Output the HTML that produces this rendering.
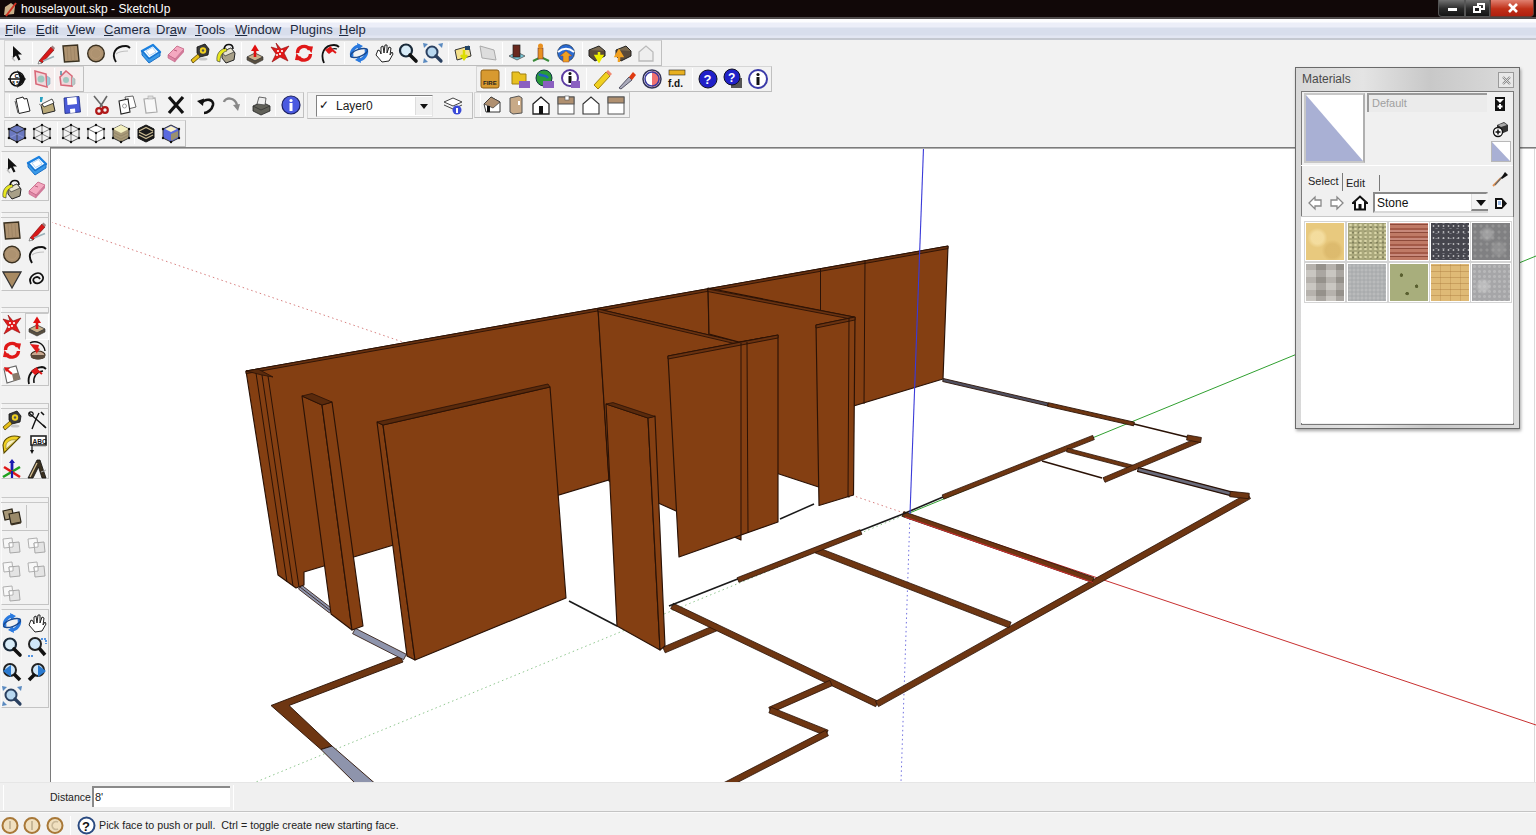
<!DOCTYPE html><html><head><meta charset="utf-8"><style>
*{margin:0;padding:0;box-sizing:border-box}
html,body{width:1536px;height:835px;overflow:hidden;background:#f2f2f2;font-family:"Liberation Sans",sans-serif;position:relative}
.a{position:absolute}
#title{left:0;top:0;width:1536px;height:19px;background:#110808;border-bottom:2px solid #4e4a4a}
#title span{position:absolute;left:21px;top:2px;color:#fff;font-size:12px;letter-spacing:0px}
#menu{left:0;top:19px;width:1536px;height:21px;background:linear-gradient(#fdfdfe 0px,#fdfdfe 3px,#eceef8 4px,#eceef8 8px,#d8deec 9px,#d8deec 16px,#e2e6f2 17px,#e2e6f2 19px);border-bottom:2px solid #c4c8d0}
#menu span{position:absolute;top:3px;font-size:13px;color:#1e2a40}
#menu u{text-decoration:underline}
.tb{background:#f2f2f2;border:1px solid #d6d6d6;border-right-color:#c0c0c0;border-bottom-color:#bcbcbc}
.sep{position:absolute;width:1px;background:#c4c4c4;border-right:1px solid #fff}
svg.ic{position:absolute;width:22px;height:22px;overflow:visible}
</style></head><body>
<div id="title" class="a"><svg class="a" style="left:2px;top:1px" width="16" height="16" viewBox="0 0 16 16"><path d="M2 14 L3 6 L9 2 L13 5 L12 13 Z" fill="#c9b08a"/><path d="M4 15 L14 2" stroke="#d03020" stroke-width="2"/></svg><span>houselayout.skp - SketchUp</span><div class="a" style="left:1438px;top:0;width:27px;height:17px;background:linear-gradient(#707070,#2a2a2a 55%,#141414);border:1px solid #555;border-top:none;border-radius:0 0 0 4px"><div class="a" style="left:9px;top:8px;width:9px;height:3px;background:#fff"></div></div><div class="a" style="left:1465px;top:0;width:25px;height:17px;background:linear-gradient(#707070,#2a2a2a 55%,#141414);border:1px solid #555;border-top:none"><div class="a" style="left:11px;top:3px;width:8px;height:7px;border:2px solid #fff"></div><div class="a" style="left:7px;top:6px;width:8px;height:7px;border:2px solid #fff;background:#1a1a1a"></div></div><div class="a" style="left:1490px;top:0;width:44px;height:17px;background:linear-gradient(#e08070,#c03018 55%,#b02010);border:1px solid #6a3a30;border-top:none;border-radius:0 0 4px 0"><svg class="a" style="left:16px;top:2px" width="12" height="12" viewBox="0 0 12 12"><path d="M2 2L10 10M10 2L2 10" stroke="#fff" stroke-width="2.6"/></svg></div></div>
<div id="menu" class="a">
<span style="left:5px"><u>F</u>ile</span>
<span style="left:36px"><u>E</u>dit</span>
<span style="left:67px"><u>V</u>iew</span>
<span style="left:104px"><u>C</u>amera</span>
<span style="left:156px">Dr<u>a</u>w</span>
<span style="left:195px"><u>T</u>ools</span>
<span style="left:235px"><u>W</u>indow</span>
<span style="left:290px">Plugins</span>
<span style="left:339px"><u>H</u>elp</span>
</div>
<div class="a tb" style="left:4px;top:40px;width:658px;height:26px"></div>
<div class="sep" style="left:32px;top:42px;height:22px"></div>
<div class="sep" style="left:136px;top:42px;height:22px"></div>
<div class="sep" style="left:241px;top:42px;height:22px"></div>
<div class="sep" style="left:344px;top:42px;height:22px"></div>
<div class="sep" style="left:448px;top:42px;height:22px"></div>
<div class="sep" style="left:502px;top:42px;height:22px"></div>
<div class="sep" style="left:582px;top:42px;height:22px"></div>
<svg class="ic" style="left:6px;top:42px" viewBox="0 0 22 22"><path d="M7 4 L7 16 L10 13.5 L12.5 18.5 L14.5 17.5 L12 12.5 L16 12.5 Z" fill="#111"/><path d="M6 16 L9 19 M6 14 L8 18" stroke="#bbb" stroke-width="1.2"/></svg>
<svg class="ic" style="left:35px;top:42px" viewBox="0 0 22 22"><path d="M4 19 L16 5 L19 8 L7 21 Z" fill="#d81818" stroke="#7a0a0a" stroke-width=".7"/><path d="M16 5 L17.5 3.5 L20 6 L19 8Z" fill="#a08080"/><path d="M4 19 L7 21 L3 22Z" fill="#fff" stroke="#333" stroke-width=".5"/><path d="M8 19 L19 14.5" stroke="#9ab0b8" stroke-width="1.6"/></svg>
<svg class="ic" style="left:60px;top:42px" viewBox="0 0 22 22"><path d="M3 4 L17.5 3 L19 19 L4.5 20 Z" fill="#ad9270" stroke="#3a3020" stroke-width="1.4"/><path d="M7 5 L8 19 M10.5 5 L11.5 19 M14 4.5 L15 19" stroke="#9a8060" stroke-width=".7"/></svg>
<svg class="ic" style="left:85px;top:42px" viewBox="0 0 22 22"><circle cx="11" cy="11.5" r="8.3" fill="#ad9270" stroke="#3a3020" stroke-width="1.4"/><circle cx="11" cy="11.5" r="5" fill="none" stroke="#b89a78" stroke-width=".8"/></svg>
<svg class="ic" style="left:110px;top:42px" viewBox="0 0 22 22"><path d="M6 20 C1 12 5 4 16 4 C18 4 19 5 20 6" stroke="#111" stroke-width="1.9" fill="none"/><path d="M6 12 C9 9.5 14 9 18 9" stroke="#c0c0c0" stroke-width="1.1" fill="none"/></svg>
<svg class="ic" style="left:140px;top:42px" viewBox="0 0 22 22"><path d="M2 9 L13 3 L20 10 L9 17Z" fill="#fff" stroke="#1a80e0" stroke-width="2.4" stroke-linejoin="round"/><path d="M2 9 L2 13 L9 21 L20 14 L20 10 L9 17Z" fill="#3a9ae8" stroke="#1a70c8" stroke-width="1"/><path d="M6 9 L12.5 5.5 L16 10 L9.5 13.5Z" fill="#fff" stroke="#9cc8f0" stroke-width=".8"/></svg>
<svg class="ic" style="left:165px;top:42px" viewBox="0 0 22 22"><path d="M3 13 L12 4 L19 7 L10 17 Z" fill="#f4a8c0" stroke="#c06080" stroke-width=".8"/><path d="M3 13 L10 17 L10 20 L3 16Z" fill="#e088a8" stroke="#c06080" stroke-width=".6"/><path d="M10 17 L19 7 L19 10 L10 20Z" fill="#d07898"/><path d="M9 8 L12 9" stroke="#b05070" stroke-width=".8"/></svg>
<svg class="ic" style="left:189px;top:42px" viewBox="0 0 22 22"><path d="M8 5 L16 2 L20 7 L19 13 L11 15 L8 11Z" fill="#3a3a3a" stroke="#111" stroke-width=".8"/><circle cx="14" cy="8.5" r="3.2" fill="#f0d020"/><circle cx="14" cy="8.5" r="1.2" fill="#555"/><path d="M2 18 L9 12 L11 15 L4 21Z" fill="#e8c018" stroke="#4a3a00" stroke-width=".8"/><ellipse cx="14" cy="17" rx="4.5" ry="1.6" fill="#c8c8c8"/></svg>
<svg class="ic" style="left:215px;top:42px" viewBox="0 0 22 22"><path d="M7 10 L16 6 L20 11 L19 18 L11 21 L7 16Z" fill="#a8a088" stroke="#222" stroke-width="1"/><path d="M7 10 L16 6 L19 10 L10 14Z" fill="#e8e4d0" stroke="#333" stroke-width=".7"/><path d="M2 19 C1 12 5 7 11 6 L12 9 C7 10 5 14 5 20Z" fill="#e8e820" stroke="#333" stroke-width=".6"/><path d="M9 7 C10 1 18 1 18 7" stroke="#111" stroke-width="1.6" fill="none"/></svg>
<svg class="ic" style="left:244px;top:42px" viewBox="0 0 22 22"><path d="M3 15 L11 11 L19 15 L11 19Z" fill="#c8b08a" stroke="#333" stroke-width=".8"/><path d="M3 15 L3 18 L11 22 L19 18 L19 15 L11 19Z" fill="#5a5040" stroke="#333" stroke-width=".6"/><path d="M11 15 L11 8" stroke="#e01010" stroke-width="2.6"/><path d="M7 9 L11 2.5 L15 9Z" fill="#e01010"/></svg>
<svg class="ic" style="left:269px;top:42px" viewBox="0 0 22 22"><path d="M7 1 L12 7 L20 4 L15 11 L19 19 L11 15 L3 20 L7 12 L2 5 L9 7Z" fill="#e01818" stroke="#8a0808" stroke-width=".6"/><circle cx="9" cy="9" r="1.1" fill="#fff"/><circle cx="13" cy="9" r="1.1" fill="#fff"/><circle cx="11" cy="12" r="1.1" fill="#fff"/><circle cx="8" cy="13" r="1" fill="#fff"/></svg>
<svg class="ic" style="left:293px;top:42px" viewBox="0 0 22 22"><path d="M4.5 11 A6.5 6.5 0 0 1 16.5 7.5" stroke="#e01818" stroke-width="3.4" fill="none"/><path d="M17.5 12 A6.5 6.5 0 0 1 5.5 15" stroke="#e01818" stroke-width="3.4" fill="none"/><path d="M13 4 L20 4.5 L18.5 11Z M9 18.5 L2 18 L3.5 11Z" fill="#e01818"/></svg>
<svg class="ic" style="left:319px;top:42px" viewBox="0 0 22 22"><path d="M5 21 C1 12 5 3 15 3 C17 3 19 4 20 5" stroke="#111" stroke-width="1.8" fill="none"/><path d="M9 11 C11 7 15 6 18 7" stroke="#111" stroke-width="1.3" fill="none"/><path d="M6 8 L12 4 L14 9 L10 12Z" fill="#e01818"/><path d="M12 7 L17 11" stroke="#e01818" stroke-width="2"/></svg>
<svg class="ic" style="left:348px;top:42px" viewBox="0 0 22 22"><path d="M4 15 C2 10 6 4 12 4" stroke="#2a7ae0" stroke-width="3.2" fill="none"/><path d="M18 7 C20 12 16 18 10 18" stroke="#2a7ae0" stroke-width="3.2" fill="none"/><path d="M9 1 L15 4 L10 8Z M13 21 L7 18 L12 14Z" fill="#2a7ae0"/><ellipse cx="11" cy="11" rx="9" ry="3.5" fill="none" stroke="#1a4a90" stroke-width="1.4" transform="rotate(-20 11 11)"/></svg>
<svg class="ic" style="left:373px;top:42px" viewBox="0 0 22 22"><path d="M3 13 L5 8 L7 9 L8 12 L8 5 L10 4 L11 11 L12 3 L14 3 L14 11 L16 5 L18 6 L17 13 L19 10 L20 12 L16 19 L9 20 Z" fill="#fff" stroke="#222" stroke-width="1"/></svg>
<svg class="ic" style="left:397px;top:42px" viewBox="0 0 22 22"><circle cx="9" cy="8.5" r="6" fill="#d8ecf8" stroke="#1a2a3a" stroke-width="2.2"/><path d="M13 13 L19 19" stroke="#111" stroke-width="3.6" stroke-linecap="round"/></svg>
<svg class="ic" style="left:422px;top:42px" viewBox="0 0 22 22"><circle cx="10" cy="10" r="5.5" fill="#b8d8f0" stroke="#2a4060" stroke-width="2"/><path d="M14 14 L19 19" stroke="#2a4060" stroke-width="3.2" stroke-linecap="round"/><path d="M1 1 L6 2 L2 6Z M21 1 L16 2 L20 6Z M1 21 L2 16 L6 20Z" fill="#5a8ac0"/></svg>
<svg class="ic" style="left:452px;top:42px" viewBox="0 0 22 22"><path d="M3 8 L17 4 L19 14 L5 18Z" fill="#f4e08a" stroke="#333"/><path d="M12 8 L12 15 M9 13 L12 17 L15 13" stroke="#dd0" stroke-width="2.5" fill="none"/><rect x="13" y="4" width="5" height="4" fill="#246"/></svg>
<svg class="ic" style="left:477px;top:42px" viewBox="0 0 22 22"><path d="M3 4 L17 8 L19 18 L5 16Z" fill="#ddd" stroke="#aaa"/></svg>
<svg class="ic" style="left:506px;top:42px" viewBox="0 0 22 22"><path d="M3 14 L11 10 L19 14 L11 18Z" fill="#7cc8d8" stroke="#444" stroke-width=".7"/><rect x="7" y="3" width="7" height="12" fill="#6a2a20" stroke="#222" stroke-width=".7"/></svg>
<svg class="ic" style="left:530px;top:42px" viewBox="0 0 22 22"><path d="M3 19 L11 15 L19 19" stroke="#3a8a3a" stroke-width="2" fill="none"/><rect x="8" y="6" width="5" height="11" fill="#e89020" stroke="#633" stroke-width=".6"/><circle cx="10.5" cy="4" r="2.5" fill="#e89020"/></svg>
<svg class="ic" style="left:555px;top:42px" viewBox="0 0 22 22"><circle cx="11" cy="11" r="8.5" fill="#2a6ad0" stroke="#123" stroke-width=".6"/><path d="M3 10 C8 6 14 6 19 10" stroke="#fff" stroke-width="2" fill="none"/><path d="M8 20 L8 14 L5 14 L11 9 L17 14 L14 14 L14 20Z" fill="#f0a020" stroke="#844" stroke-width=".5"/></svg>
<svg class="ic" style="left:586px;top:42px" viewBox="0 0 22 22"><path d="M3 8 L13 4 L19 9 L9 13Z" fill="#7a6a50" stroke="#222"/><path d="M3 8 L3 14 L9 19 L19 14 L19 9" fill="#5a4a3a" stroke="#222"/><path d="M13 10 L13 16 M10 14 L13 19 L16 14Z" stroke="#ee0" fill="#ee0" stroke-width="2.5"/></svg>
<svg class="ic" style="left:611px;top:42px" viewBox="0 0 22 22"><path d="M5 8 L15 4 L20 9 L10 13Z" fill="#7a6a50" stroke="#222"/><path d="M5 8 L5 14 L10 19 L20 14 L20 9" fill="#5a4a3a" stroke="#222"/><path d="M8 20 L8 13 M5 14 L8 9 L11 14Z" stroke="#f0a020" fill="#f0a020" stroke-width="2.5"/></svg>
<svg class="ic" style="left:635px;top:42px" viewBox="0 0 22 22"><path d="M4 10 L11 4 L18 10 L18 19 L4 19Z" fill="#eee" stroke="#bbb" stroke-width="1.3"/></svg>
<div class="a tb" style="left:4px;top:66px;width:80px;height:26px"></div>
<div class="sep" style="left:30px;top:68px;height:22px"></div>
<div class="sep" style="left:54px;top:68px;height:22px"></div>
<div class="a" style="left:31px;top:67px;width:23px;height:24px;background:#f6eeee"></div>
<div class="a" style="left:56px;top:67px;width:24px;height:24px;background:#f6eeee"></div>
<svg class="ic" style="left:6px;top:68px" viewBox="0 0 22 22"><circle cx="11" cy="11" r="7" fill="#fff" stroke="#111" stroke-width="1.5"/><path d="M2 11 L18 11" stroke="#111" stroke-width="1.5"/><path d="M11 2 L20 11 L11 20 L14 11Z" fill="#111"/><text x="8.5" y="9.5" font-size="6" font-family="Liberation Sans" font-weight="bold">C</text><text x="6" y="17" font-size="5" font-family="Liberation Sans" font-weight="bold">8 5</text></svg>
<svg class="ic" style="left:31px;top:68px" viewBox="0 0 22 22"><path d="M4 3 L15 6 L16 19 L5 16Z" fill="#f0d8dc" stroke="#d86878" stroke-width="1.6"/><circle cx="10" cy="11" r="3.5" fill="#9ec8c0"/><path d="M16 8 L19 10 L19 16 L16 18" fill="#9ec8d8" stroke="#8ab" stroke-width=".6"/></svg>
<svg class="ic" style="left:56px;top:68px" viewBox="0 0 22 22"><path d="M4 9 L10 3 L16 8 L16 18 L5 17Z" fill="#f0d8dc" stroke="#d86878" stroke-width="1.6"/><circle cx="10" cy="12" r="3" fill="#9ec8c0"/><path d="M16 9 L19 11 L19 16 L16 18" fill="#b8c8c8" stroke="#aaa" stroke-width=".6"/><path d="M5 7 L5 3" stroke="#4a8aa0" stroke-width="1.5"/></svg>
<div class="a tb" style="left:476px;top:66px;width:296px;height:26px"></div>
<div class="sep" style="left:482px;top:68px;height:22px"></div>
<div class="sep" style="left:505px;top:68px;height:22px"></div>
<div class="sep" style="left:586px;top:68px;height:22px"></div>
<div class="sep" style="left:692px;top:68px;height:22px"></div>
<svg class="ic" style="left:479px;top:68px" viewBox="0 0 22 22"><rect x="2" y="2" width="18" height="18" rx="2" fill="#d89a30" stroke="#8a5a10"/><text x="4" y="17" font-size="6" font-weight="bold" fill="#222" font-family="Liberation Sans">FIRE</text></svg>
<svg class="ic" style="left:510px;top:68px" viewBox="0 0 22 22"><path d="M2 4 L9 4 L10 6 L16 6 L16 16 L2 16Z" fill="#e8c020" stroke="#a08010"/><rect x="9" y="13" width="11" height="7" fill="#8a60c0"/></svg>
<svg class="ic" style="left:534px;top:68px" viewBox="0 0 22 22"><circle cx="10" cy="10" r="8" fill="#2a9a3a" stroke="#134"/><path d="M5 6 C8 9 11 6 14 10" stroke="#2060c0" stroke-width="2.5" fill="none"/><rect x="9" y="13" width="11" height="7" fill="#8a60c0"/></svg>
<svg class="ic" style="left:560px;top:68px" viewBox="0 0 22 22"><circle cx="10" cy="10" r="8" fill="#fff" stroke="#5a3aa0" stroke-width="2"/><rect x="8.5" y="8" width="3" height="7" fill="#111"/><circle cx="10" cy="5.5" r="1.5" fill="#111"/><rect x="11" y="13" width="9" height="7" fill="#8a60c0"/></svg>
<svg class="ic" style="left:591px;top:68px" viewBox="0 0 22 22"><path d="M3 17 L15 4 L19 8 L7 21Z" fill="#f0d020" stroke="#a08010"/><path d="M15 4 L17 2 L21 6 L19 8Z" fill="#f08a70"/></svg>
<svg class="ic" style="left:616px;top:68px" viewBox="0 0 22 22"><path d="M3 20 L13 9 L16 12 L5 21Z" fill="#aab" stroke="#556"/><path d="M13 9 L17 4 L20 7 L16 12Z" fill="#e03a10"/></svg>
<svg class="ic" style="left:641px;top:68px" viewBox="0 0 22 22"><circle cx="11" cy="11" r="9" fill="#fff" stroke="#335" stroke-width="1.5"/><path d="M11 3 A8 8 0 0 1 11 19Z" fill="#f07070"/><circle cx="11" cy="11" r="7" fill="none" stroke="#3a3aa0" stroke-width="1.5"/></svg>
<svg class="ic" style="left:666px;top:68px" viewBox="0 0 22 22"><rect x="3" y="2" width="16" height="5" fill="#e8b020" stroke="#222" stroke-width=".6"/><text x="2" y="19" font-size="10" font-weight="bold" fill="#111" font-family="Liberation Sans">f.d.</text></svg>
<svg class="ic" style="left:697px;top:68px" viewBox="0 0 22 22"><circle cx="11" cy="11" r="9" fill="#2020c8" stroke="#112"/><text x="6.5" y="16" font-size="13" font-weight="bold" fill="#fff" font-family="Liberation Sans">?</text></svg>
<svg class="ic" style="left:722px;top:68px" viewBox="0 0 22 22"><rect x="9" y="10" width="11" height="10" fill="#555"/><circle cx="10" cy="9" r="8" fill="#2020c8" stroke="#112"/><text x="6" y="14" font-size="12" font-weight="bold" fill="#fff" font-family="Liberation Sans">?</text></svg>
<svg class="ic" style="left:747px;top:68px" viewBox="0 0 22 22"><circle cx="11" cy="11" r="9" fill="#fff" stroke="#3a3aa8" stroke-width="2"/><circle cx="11" cy="6.5" r="1.6" fill="#111"/><rect x="9.5" y="9" width="3" height="8" fill="#111"/></svg>
<div class="a tb" style="left:4px;top:92px;width:300px;height:26px"></div>
<div class="sep" style="left:9px;top:94px;height:22px"></div>
<div class="sep" style="left:87px;top:94px;height:22px"></div>
<div class="sep" style="left:191px;top:94px;height:22px"></div>
<div class="sep" style="left:245px;top:94px;height:22px"></div>
<div class="sep" style="left:275px;top:94px;height:22px"></div>
<svg class="ic" style="left:11px;top:94px" viewBox="0 0 22 22"><path d="M5 5 L12 3 L13 5 L16 4.5 L19 17 L8 19.5Z" fill="#fff" stroke="#222" stroke-width="1"/><path d="M4 7 L7 19" stroke="#555" stroke-width="1"/></svg>
<svg class="ic" style="left:36px;top:94px" viewBox="0 0 22 22"><path d="M5 11 L17 8 L19 17 L7 20Z" fill="#b8a878" stroke="#222" stroke-width="1"/><path d="M6 10 L16 5 L18 9 L8 13Z" fill="#fff" stroke="#222" stroke-width=".8"/><path d="M4 3 L7 3 L6 8 L4 8Z" fill="#2aa0c0"/><path d="M3 10 L6 12" stroke="#888" stroke-width="1"/></svg>
<svg class="ic" style="left:61px;top:94px" viewBox="0 0 22 22"><path d="M3 4 L18 2.5 L19.5 18 L4 19.5Z" fill="#4a5ad8" stroke="#1a2a80" stroke-width=".8"/><path d="M6 4 L15.5 3 L16 10 L6.5 11Z" fill="#fff"/><path d="M9 15 L14 14.5 L14.3 18.5 L9.3 19Z" fill="#fff"/></svg>
<svg class="ic" style="left:90px;top:94px" viewBox="0 0 22 22"><path d="M4 2 L13 13 M17 2 L10 13" stroke="#666" stroke-width="1.6"/><circle cx="9" cy="17" r="2.8" fill="none" stroke="#b01818" stroke-width="2.2"/><circle cx="15" cy="16" r="2.8" fill="none" stroke="#b01818" stroke-width="2.2"/></svg>
<svg class="ic" style="left:116px;top:94px" viewBox="0 0 22 22"><path d="M9 3 L17 2 L20 13 L12 15Z" fill="#fff" stroke="#555" stroke-width=".9"/><path d="M3 7 L12 5 L14 18 L5 20Z" fill="#fff" stroke="#222" stroke-width="1.1"/><circle cx="8.5" cy="12" r="2" fill="none" stroke="#888" stroke-width=".8"/></svg>
<svg class="ic" style="left:140px;top:94px" viewBox="0 0 22 22"><path d="M4 5 L15 4 L17 18 L6 19Z" fill="#f8f8f8" stroke="#aaa" stroke-width="1.2"/><rect x="8" y="2" width="5" height="3" fill="#ddd" stroke="#aaa" stroke-width=".6"/></svg>
<svg class="ic" style="left:165px;top:94px" viewBox="0 0 22 22"><path d="M4 3 L18 19 M18 3 L4 19" stroke="#111" stroke-width="3.2"/></svg>
<svg class="ic" style="left:195px;top:94px" viewBox="0 0 22 22"><path d="M6 9 C11 4 19 5 18 11 C17 16 12 19 9 19" stroke="#111" stroke-width="2.6" fill="none"/><path d="M2 7 L9 4.5 L8 12Z" fill="#111"/></svg>
<svg class="ic" style="left:220px;top:94px" viewBox="0 0 22 22"><path d="M4 8 C5 3 15 3 17 11" stroke="#888" stroke-width="2.4" fill="none"/><path d="M13 11 L20 10 L18 17Z" fill="#888"/></svg>
<svg class="ic" style="left:250px;top:94px" viewBox="0 0 22 22"><path d="M3 12 L12 8 L20 12 L20 17 L11 21 L3 17Z" fill="#606058" stroke="#222" stroke-width=".8"/><path d="M7 10 L9 3 L16 4 L15 11Z" fill="#eee" stroke="#444" stroke-width=".8"/><path d="M3 12 L11 16 L20 12" stroke="#333" fill="none" stroke-width=".8"/></svg>
<svg class="ic" style="left:280px;top:94px" viewBox="0 0 22 22"><circle cx="11" cy="11" r="9" fill="#4a5ae0" stroke="#1a2060" stroke-width="1.2"/><circle cx="11" cy="6.5" r="1.6" fill="#fff"/><rect x="9.5" y="9" width="3" height="8" fill="#fff"/></svg>
<div class="a tb" style="left:307px;top:92px;width:166px;height:27px"></div>
<div class="a" style="left:316px;top:95px;width:117px;height:22px;background:#fff;border:1px solid #828282;border-right-color:#e4e4e4;border-bottom-color:#e4e4e4"></div>
<div class="a" style="left:319px;top:98px;font-size:12px;color:#111">&#10003;</div>
<div class="a" style="left:336px;top:99px;font-size:12px;color:#222">Layer0</div>
<div class="a" style="left:415px;top:97px;width:17px;height:18px;background:#f0f0f0;border-left:1px solid #ddd"><div class="a" style="left:4px;top:7px;width:0;height:0;border-left:4px solid transparent;border-right:4px solid transparent;border-top:5px solid #111"></div></div>
<svg class="ic" style="left:442px;top:94px" viewBox="0 0 22 22"><path d="M2 8 L11 4 L20 8 L11 12Z" fill="#fff" stroke="#444"/><path d="M2 11 L11 15 L20 11" stroke="#444" fill="none"/><circle cx="15" cy="16" r="4.5" fill="#3a4ad8"/><rect x="14" y="14" width="2" height="5" fill="#fff"/></svg>
<div class="a tb" style="left:474px;top:92px;width:156px;height:26px"></div>
<div class="sep" style="left:480px;top:94px;height:22px"></div>
<svg class="ic" style="left:481px;top:94px" viewBox="0 0 22 22"><path d="M3 10 L10 3 L19 8 L19 18 L5 18Z" fill="#fff" stroke="#333"/><path d="M3 10 L10 3 L19 8 L12 14Z" fill="#b09070" stroke="#333" stroke-width=".7"/><rect x="6" y="12" width="3" height="6" fill="#111"/></svg>
<svg class="ic" style="left:505px;top:94px" viewBox="0 0 22 22"><path d="M5 4 L14 2 L17 4 L17 19 L8 20 L5 18Z" fill="#c8aa88" stroke="#555"/><rect x="13" y="7" width="2" height="4" fill="#fff"/></svg>
<svg class="ic" style="left:530px;top:94px" viewBox="0 0 22 22"><path d="M3 10 L11 3 L19 10 L19 20 L3 20Z" fill="#fff" stroke="#222" stroke-width="1.3"/><rect x="9" y="12" width="4" height="8" fill="#111"/></svg>
<svg class="ic" style="left:555px;top:94px" viewBox="0 0 22 22"><rect x="3" y="3" width="16" height="17" fill="#fff" stroke="#555"/><rect x="3" y="3" width="16" height="7" fill="#b09070" stroke="#555"/><rect x="10" y="2" width="4" height="4" fill="#fff" stroke="#555" stroke-width=".6"/></svg>
<svg class="ic" style="left:580px;top:94px" viewBox="0 0 22 22"><path d="M3 10 L11 3 L19 10 L19 20 L3 20Z" fill="#fff" stroke="#333" stroke-width="1.1"/></svg>
<svg class="ic" style="left:605px;top:94px" viewBox="0 0 22 22"><rect x="3" y="3" width="16" height="17" fill="#fff" stroke="#555"/><rect x="3" y="3" width="16" height="6" fill="#b09070" stroke="#555"/></svg>
<div class="a tb" style="left:4px;top:120px;width:182px;height:27px"></div>
<div class="sep" style="left:57px;top:122px;height:22px"></div>
<div class="sep" style="left:134px;top:122px;height:22px"></div>
<svg class="ic" style="left:6px;top:122px" viewBox="0 0 22 22"><path d="M3 7 L11 3 L19 7 L19 16 L11 20 L3 16Z" fill="#6a78c0" stroke="#222" stroke-width="1"/><path d="M3 7 L11 11 L19 7 M11 11 L11 20" stroke="#333" fill="none" stroke-width=".8"/><path d="M3 16 L11 12 L19 16" stroke="#9aa4d8" fill="none" stroke-width=".7"/><g fill="#111"><circle cx="3" cy="7" r="1.3"/><circle cx="11" cy="3" r="1.3"/><circle cx="19" cy="7" r="1.3"/><circle cx="3" cy="16" r="1.3"/><circle cx="11" cy="20" r="1.3"/><circle cx="19" cy="16" r="1.3"/></g></svg>
<svg class="ic" style="left:31px;top:122px" viewBox="0 0 22 22"><path d="M3 7 L11 3 L19 7 L19 16 L11 20 L3 16Z" fill="none" stroke="#333" stroke-width=".9"/><path d="M3 7 L11 11 L19 7 M11 11 L11 20 M3 16 L11 12 L19 16 M11 3 L11 12" stroke="#555" fill="none" stroke-width=".7"/><g fill="#111"><circle cx="3" cy="7" r="1.2"/><circle cx="11" cy="3" r="1.2"/><circle cx="19" cy="7" r="1.2"/><circle cx="3" cy="16" r="1.2"/><circle cx="11" cy="20" r="1.2"/><circle cx="19" cy="16" r="1.2"/><circle cx="11" cy="11" r="1.2"/></g></svg>
<svg class="ic" style="left:60px;top:122px" viewBox="0 0 22 22"><path d="M3 7 L11 3 L19 7 L19 16 L11 20 L3 16Z" fill="none" stroke="#333" stroke-width=".9"/><path d="M3 7 L11 11 L19 7 M11 11 L11 20 M3 16 L11 12 L19 16 M11 3 L11 12" stroke="#555" fill="none" stroke-width=".7"/><g fill="#111"><circle cx="3" cy="7" r="1.2"/><circle cx="11" cy="3" r="1.2"/><circle cx="19" cy="7" r="1.2"/><circle cx="3" cy="16" r="1.2"/><circle cx="11" cy="20" r="1.2"/><circle cx="19" cy="16" r="1.2"/><circle cx="11" cy="11" r="1.2"/></g></svg>
<svg class="ic" style="left:85px;top:122px" viewBox="0 0 22 22"><path d="M3 7 L11 3 L19 7 L19 16 L11 20 L3 16Z" fill="#fff" stroke="#333" stroke-width=".9"/><path d="M3 7 L11 11 L19 7 M11 11 L11 20" stroke="#444" fill="none" stroke-width=".8"/><g fill="#111"><circle cx="3" cy="7" r="1.2"/><circle cx="11" cy="3" r="1.2"/><circle cx="19" cy="7" r="1.2"/><circle cx="3" cy="16" r="1.2"/><circle cx="11" cy="20" r="1.2"/><circle cx="19" cy="16" r="1.2"/><circle cx="11" cy="11" r="1.2"/></g></svg>
<svg class="ic" style="left:110px;top:122px" viewBox="0 0 22 22"><path d="M3 7 L11 3 L19 7 L19 16 L11 20 L3 16Z" fill="#a89a78" stroke="#333" stroke-width="1"/><path d="M3 7 L11 3 L19 7 L11 11Z" fill="#f4f0c0"/><path d="M3 10 L11 14 L19 10 M3 13 L11 17 L19 13" stroke="#8a7a60" stroke-width=".6" fill="none"/><g fill="#111"><circle cx="3" cy="7" r="1.2"/><circle cx="19" cy="7" r="1.2"/><circle cx="3" cy="16" r="1.2"/><circle cx="11" cy="20" r="1.2"/><circle cx="19" cy="16" r="1.2"/></g></svg>
<svg class="ic" style="left:135px;top:122px" viewBox="0 0 22 22"><path d="M3 7 L11 3 L19 7 L19 16 L11 20 L3 16Z" fill="#1a1a1a" stroke="#111" stroke-width="1"/><path d="M4 9 L11 5.5 L18 9 M4 13 L11 16.5 L18 13 M4 10 L11 13.5 L18 10" stroke="#c8b890" stroke-width="1.3" fill="none"/></svg>
<svg class="ic" style="left:160px;top:122px" viewBox="0 0 22 22"><path d="M3 7 L11 3 L19 7 L19 16 L11 20 L3 16Z" fill="#5a6ae0" stroke="#333" stroke-width="1"/><path d="M5 7 L11 4 L17 7 L11 10Z" fill="#f8f0c8"/><path d="M11 12 L18 9 L18 15 L11 19Z" fill="#9a9070"/><g fill="#111"><circle cx="3" cy="7" r="1.2"/><circle cx="19" cy="7" r="1.2"/><circle cx="3" cy="16" r="1.2"/><circle cx="11" cy="20" r="1.2"/><circle cx="19" cy="16" r="1.2"/></g></svg>
<div class="a" style="left:0;top:148px;width:51px;height:634px;background:#f2f2f2;border-right:1px solid #7a7a7a"></div>
<div class="a" style="left:1px;top:151px;width:48px;height:50px;border:1px solid #c4c4c4;border-left-color:#fafafa;border-top-color:#c8c8c8"></div>
<div class="a" style="left:1px;top:212px;width:48px;height:79px;border:1px solid #c4c4c4;border-left-color:#fafafa;border-top-color:#c8c8c8"></div>
<div class="a" style="left:1px;top:307px;width:48px;height:79px;border:1px solid #c4c4c4;border-left-color:#fafafa;border-top-color:#c8c8c8"></div>
<div class="a" style="left:1px;top:403px;width:48px;height:76px;border:1px solid #c4c4c4;border-left-color:#fafafa;border-top-color:#c8c8c8"></div>
<div class="a" style="left:1px;top:497px;width:48px;height:108px;border:1px solid #c4c4c4;border-left-color:#fafafa;border-top-color:#c8c8c8"></div>
<div class="a" style="left:1px;top:609px;width:48px;height:99px;border:1px solid #c4c4c4;border-left-color:#fafafa;border-top-color:#c8c8c8"></div>
<div class="a" style="left:2px;top:530px;width:46px;height:1px;background:#c4c4c4"></div>
<div class="a" style="left:1px;top:217px;width:48px;height:1px;background:#c8c8c8"></div>
<div class="a" style="left:1px;top:312px;width:48px;height:1px;background:#c8c8c8"></div>
<div class="a" style="left:1px;top:408px;width:48px;height:1px;background:#c8c8c8"></div>
<div class="a" style="left:1px;top:502px;width:48px;height:1px;background:#c8c8c8"></div>
<div class="a" style="left:26px;top:505px;width:1px;height:23px;background:#c4c4c4"></div>
<div class="a" style="left:25px;top:313px;width:24px;height:27px;border:1px solid #c8c8c8;border-right-color:#fff;border-bottom-color:#fff;background:#f6f6f6"></div>
<svg class="ic" style="left:1px;top:154px" viewBox="0 0 22 22"><path d="M7 4 L7 16 L10 13.5 L12.5 18.5 L14.5 17.5 L12 12.5 L16 12.5 Z" fill="#111"/><path d="M6 16 L9 19 M6 14 L8 18" stroke="#bbb" stroke-width="1.2"/></svg>
<svg class="ic" style="left:26px;top:154px" viewBox="0 0 22 22"><path d="M2 9 L13 3 L20 10 L9 17Z" fill="#fff" stroke="#1a80e0" stroke-width="2.4" stroke-linejoin="round"/><path d="M2 9 L2 13 L9 21 L20 14 L20 10 L9 17Z" fill="#3a9ae8" stroke="#1a70c8" stroke-width="1"/><path d="M6 9 L12.5 5.5 L16 10 L9.5 13.5Z" fill="#fff" stroke="#9cc8f0" stroke-width=".8"/></svg>
<svg class="ic" style="left:1px;top:178px" viewBox="0 0 22 22"><path d="M7 10 L16 6 L20 11 L19 18 L11 21 L7 16Z" fill="#a8a088" stroke="#222" stroke-width="1"/><path d="M7 10 L16 6 L19 10 L10 14Z" fill="#e8e4d0" stroke="#333" stroke-width=".7"/><path d="M2 19 C1 12 5 7 11 6 L12 9 C7 10 5 14 5 20Z" fill="#e8e820" stroke="#333" stroke-width=".6"/><path d="M9 7 C10 1 18 1 18 7" stroke="#111" stroke-width="1.6" fill="none"/></svg>
<svg class="ic" style="left:26px;top:178px" viewBox="0 0 22 22"><path d="M3 13 L12 4 L19 7 L10 17 Z" fill="#f4a8c0" stroke="#c06080" stroke-width=".8"/><path d="M3 13 L10 17 L10 20 L3 16Z" fill="#e088a8" stroke="#c06080" stroke-width=".6"/><path d="M10 17 L19 7 L19 10 L10 20Z" fill="#d07898"/><path d="M9 8 L12 9" stroke="#b05070" stroke-width=".8"/></svg>
<svg class="ic" style="left:1px;top:219px" viewBox="0 0 22 22"><path d="M3 4 L17.5 3 L19 19 L4.5 20 Z" fill="#ad9270" stroke="#3a3020" stroke-width="1.4"/><path d="M7 5 L8 19 M10.5 5 L11.5 19 M14 4.5 L15 19" stroke="#9a8060" stroke-width=".7"/></svg>
<svg class="ic" style="left:26px;top:219px" viewBox="0 0 22 22"><path d="M4 19 L16 5 L19 8 L7 21 Z" fill="#d81818" stroke="#7a0a0a" stroke-width=".7"/><path d="M16 5 L17.5 3.5 L20 6 L19 8Z" fill="#a08080"/><path d="M4 19 L7 21 L3 22Z" fill="#fff" stroke="#333" stroke-width=".5"/><path d="M8 19 L19 14.5" stroke="#9ab0b8" stroke-width="1.6"/></svg>
<svg class="ic" style="left:1px;top:243px" viewBox="0 0 22 22"><circle cx="11" cy="11.5" r="8.3" fill="#ad9270" stroke="#3a3020" stroke-width="1.4"/><circle cx="11" cy="11.5" r="5" fill="none" stroke="#b89a78" stroke-width=".8"/></svg>
<svg class="ic" style="left:26px;top:243px" viewBox="0 0 22 22"><path d="M6 20 C1 12 5 4 16 4 C18 4 19 5 20 6" stroke="#111" stroke-width="1.9" fill="none"/><path d="M6 12 C9 9.5 14 9 18 9" stroke="#c0c0c0" stroke-width="1.1" fill="none"/></svg>
<svg class="ic" style="left:1px;top:268px" viewBox="0 0 22 22"><path d="M2 4 L20 4 L11 20Z" fill="#a88a62" stroke="#333" stroke-width="1.3"/></svg>
<svg class="ic" style="left:26px;top:268px" viewBox="0 0 22 22"><path d="M5 16 C1 8 12 2 16 7 C20 12 12 18 8 14 C5 10 12 7 14 11" stroke="#111" stroke-width="1.8" fill="none"/></svg>
<svg class="ic" style="left:1px;top:314px" viewBox="0 0 22 22"><path d="M7 1 L12 7 L20 4 L15 11 L19 19 L11 15 L3 20 L7 12 L2 5 L9 7Z" fill="#e01818" stroke="#8a0808" stroke-width=".6"/><circle cx="9" cy="9" r="1.1" fill="#fff"/><circle cx="13" cy="9" r="1.1" fill="#fff"/><circle cx="11" cy="12" r="1.1" fill="#fff"/><circle cx="8" cy="13" r="1" fill="#fff"/></svg>
<svg class="ic" style="left:26px;top:314px" viewBox="0 0 22 22"><path d="M3 15 L11 11 L19 15 L11 19Z" fill="#c8b08a" stroke="#333" stroke-width=".8"/><path d="M3 15 L3 18 L11 22 L19 18 L19 15 L11 19Z" fill="#5a5040" stroke="#333" stroke-width=".6"/><path d="M11 15 L11 8" stroke="#e01010" stroke-width="2.6"/><path d="M7 9 L11 2.5 L15 9Z" fill="#e01010"/></svg>
<svg class="ic" style="left:1px;top:339px" viewBox="0 0 22 22"><path d="M4.5 11 A6.5 6.5 0 0 1 16.5 7.5" stroke="#e01818" stroke-width="3.4" fill="none"/><path d="M17.5 12 A6.5 6.5 0 0 1 5.5 15" stroke="#e01818" stroke-width="3.4" fill="none"/><path d="M13 4 L20 4.5 L18.5 11Z M9 18.5 L2 18 L3.5 11Z" fill="#e01818"/></svg>
<svg class="ic" style="left:26px;top:339px" viewBox="0 0 22 22"><ellipse cx="12" cy="16" rx="7" ry="4" fill="#c8a890" stroke="#3a2a1a" stroke-width="1.2"/><path d="M5 16 L5 18 C5 21 19 21 19 18 L19 16" fill="#5a4a3a"/><path d="M4 4 C10 1 18 4 19 12" stroke="#111" stroke-width="1.4" fill="none"/><path d="M5 6 L12 8 L10 15 L14 10Z" fill="#e01818"/><path d="M4 5 L13 6 L11 14Z" fill="#e01818"/></svg>
<svg class="ic" style="left:1px;top:363px" viewBox="0 0 22 22"><path d="M3 6 L15 3 L19 16 L6 20Z" fill="#fff" stroke="#666" stroke-width="1.1"/><path d="M11 11 L17 9.5 L19 16 L12.5 18Z" fill="#8a7a6a"/><path d="M11 11 L5 6" stroke="#e01818" stroke-width="2.2"/><path d="M3 4 L9 5 L5 9Z" fill="#e01818"/></svg>
<svg class="ic" style="left:26px;top:363px" viewBox="0 0 22 22"><path d="M3 21 C1 13 6 5 16 4 C18 4 19 5 20 6" stroke="#111" stroke-width="1.8" fill="none"/><path d="M8 20 C7 14 10 9 17 8" stroke="#111" stroke-width="1.5" fill="none"/><path d="M5 8 L11 4 L13 9 L9 12Z" fill="#e01818"/><path d="M11 7 L16 11" stroke="#e01818" stroke-width="2"/></svg>
<svg class="ic" style="left:1px;top:409px" viewBox="0 0 22 22"><path d="M8 5 L16 2 L20 7 L19 13 L11 15 L8 11Z" fill="#3a3a3a" stroke="#111" stroke-width=".8"/><circle cx="14" cy="8.5" r="3.2" fill="#f0d020"/><circle cx="14" cy="8.5" r="1.2" fill="#555"/><path d="M2 18 L9 12 L11 15 L4 21Z" fill="#e8c018" stroke="#4a3a00" stroke-width=".8"/><ellipse cx="14" cy="17" rx="4.5" ry="1.6" fill="#c8c8c8"/></svg>
<svg class="ic" style="left:26px;top:409px" viewBox="0 0 22 22"><path d="M3 4 L10 10 M10 10 L6 20 M10 10 L19 18 M13 4 L10 10" stroke="#111" stroke-width="1.4" fill="none"/><circle cx="5" cy="5" r="2.2" fill="none" stroke="#111" stroke-width="1.2"/><path d="M15 3 L18 6 M17 16 L20 19" stroke="#111" stroke-width="1.6"/></svg>
<svg class="ic" style="left:1px;top:433px" viewBox="0 0 22 22"><path d="M3 20 L2 12 C3 5 11 1 19 4 Z" fill="#f0d020" stroke="#5a4a00" stroke-width="1.1"/><path d="M5 16 L5 12 C6 8 11 6 15 7Z" fill="#f8f0c0" stroke="#8a7a20" stroke-width=".6"/></svg>
<svg class="ic" style="left:26px;top:433px" viewBox="0 0 22 22"><rect x="5" y="3" width="15" height="9" fill="#fff" stroke="#222" stroke-width="1.6"/><text x="6.5" y="10.5" font-size="6.5" font-weight="bold" font-family="Liberation Sans" fill="#111">ABC</text><path d="M6 12 L6 19" stroke="#111" stroke-width="1.2"/><path d="M4 17 L6 21 L8 17Z" fill="#111"/><path d="M7 13 L20 13" stroke="#888" stroke-width=".8"/></svg>
<svg class="ic" style="left:1px;top:458px" viewBox="0 0 22 22"><path d="M11 13 L11 3" stroke="#1a1ab0" stroke-width="2.8"/><path d="M8 5 L11 1 L14 5Z" fill="#1a1ab0"/><path d="M2 19 L19 9" stroke="#20a020" stroke-width="2.6"/><path d="M3 9 L19 19" stroke="#e01818" stroke-width="2.6"/><path d="M11 13 L11 20" stroke="#1a1ab0" stroke-width="2.2"/></svg>
<svg class="ic" style="left:26px;top:458px" viewBox="0 0 22 22"><path d="M2 20 L11 2 L14 2 L20 20 L16 20 L12.5 9 L7 20Z" fill="#3a3020" stroke="#111" stroke-width=".8"/><path d="M4 19 L11 5" stroke="#d8c090" stroke-width="1.2"/><path d="M15 14 L20 12" stroke="#aaa" stroke-width="1"/></svg>
<svg class="ic" style="left:1px;top:505px" viewBox="0 0 22 22"><path d="M2 6 L11 4 L13 13 L4 15Z" fill="#a89878" stroke="#2a2418" stroke-width="1.2"/><path d="M8 9 L18 7 L20 17 L10 19Z" fill="#9a8a6a" stroke="#2a2418" stroke-width="1.2"/><path d="M10 19 L20 17 L20 18.5 L10.5 20.5Z" fill="#3a3020"/></svg>
<svg class="ic" style="left:1px;top:534px" viewBox="0 0 22 22"><path d="M2 5 L11 4 L12 13 L3 14Z" fill="#f8f8f8" stroke="#b0b0b0" stroke-width="1"/><path d="M8 9 L18 8 L19 18 L9 19Z" fill="#e4e4e4" stroke="#a8a8a8" stroke-width="1"/><path d="M8 9 L12 8.6 L12 13 L8.5 13.4Z" fill="#fff" stroke="#999" stroke-width=".7"/></svg>
<svg class="ic" style="left:26px;top:534px" viewBox="0 0 22 22"><path d="M2 5 L11 4 L12 13 L3 14Z" fill="#f8f8f8" stroke="#b0b0b0" stroke-width="1"/><path d="M8 9 L18 8 L19 18 L9 19Z" fill="#e4e4e4" stroke="#a8a8a8" stroke-width="1"/><path d="M8 9 L12 8.6 L12 13 L8.5 13.4Z" fill="#fff" stroke="#999" stroke-width=".7"/></svg>
<svg class="ic" style="left:1px;top:558px" viewBox="0 0 22 22"><path d="M2 5 L11 4 L12 13 L3 14Z" fill="#f8f8f8" stroke="#b0b0b0" stroke-width="1"/><path d="M8 9 L18 8 L19 18 L9 19Z" fill="#e4e4e4" stroke="#a8a8a8" stroke-width="1"/><path d="M8 9 L12 8.6 L12 13 L8.5 13.4Z" fill="#fff" stroke="#999" stroke-width=".7"/></svg>
<svg class="ic" style="left:26px;top:558px" viewBox="0 0 22 22"><path d="M2 5 L11 4 L12 13 L3 14Z" fill="#f8f8f8" stroke="#b0b0b0" stroke-width="1"/><path d="M8 9 L18 8 L19 18 L9 19Z" fill="#e4e4e4" stroke="#a8a8a8" stroke-width="1"/><path d="M8 9 L12 8.6 L12 13 L8.5 13.4Z" fill="#fff" stroke="#999" stroke-width=".7"/></svg>
<svg class="ic" style="left:1px;top:582px" viewBox="0 0 22 22"><path d="M2 5 L11 4 L12 13 L3 14Z" fill="#f8f8f8" stroke="#b0b0b0" stroke-width="1"/><path d="M8 9 L18 8 L19 18 L9 19Z" fill="#e4e4e4" stroke="#a8a8a8" stroke-width="1"/><path d="M8 9 L12 8.6 L12 13 L8.5 13.4Z" fill="#fff" stroke="#999" stroke-width=".7"/></svg>
<svg class="ic" style="left:1px;top:612px" viewBox="0 0 22 22"><path d="M4 15 C2 10 6 4 12 4" stroke="#2a7ae0" stroke-width="3.2" fill="none"/><path d="M18 7 C20 12 16 18 10 18" stroke="#2a7ae0" stroke-width="3.2" fill="none"/><path d="M9 1 L15 4 L10 8Z M13 21 L7 18 L12 14Z" fill="#2a7ae0"/><ellipse cx="11" cy="11" rx="9" ry="3.5" fill="none" stroke="#1a4a90" stroke-width="1.4" transform="rotate(-20 11 11)"/></svg>
<svg class="ic" style="left:26px;top:612px" viewBox="0 0 22 22"><path d="M3 13 L5 8 L7 9 L8 12 L8 5 L10 4 L11 11 L12 3 L14 3 L14 11 L16 5 L18 6 L17 13 L19 10 L20 12 L16 19 L9 20 Z" fill="#fff" stroke="#222" stroke-width="1"/></svg>
<svg class="ic" style="left:1px;top:636px" viewBox="0 0 22 22"><circle cx="9" cy="8.5" r="6" fill="#d8ecf8" stroke="#1a2a3a" stroke-width="2.2"/><path d="M13 13 L19 19" stroke="#111" stroke-width="3.6" stroke-linecap="round"/></svg>
<svg class="ic" style="left:26px;top:636px" viewBox="0 0 22 22"><circle cx="9" cy="8" r="6" fill="#cfe6f8" stroke="#222" stroke-width="2"/><path d="M13 12 L19 19" stroke="#111" stroke-width="3.5"/><path d="M15 3 L20 3 L20 8 M2 20 L7 20" stroke="#2277dd" stroke-width="1.5" stroke-dasharray="2 1" fill="none"/></svg>
<svg class="ic" style="left:1px;top:661px" viewBox="0 0 22 22"><circle cx="9" cy="9" r="6" fill="#cfe6f8" stroke="#222" stroke-width="2"/><path d="M13 13 L19 19" stroke="#111" stroke-width="3.5"/><path d="M2 10 L10 4 L10 16Z" fill="#2a7ad0"/></svg>
<svg class="ic" style="left:26px;top:661px" viewBox="0 0 22 22"><circle cx="12" cy="9" r="6" fill="#cfe6f8" stroke="#222" stroke-width="2"/><path d="M9 13 L3 19" stroke="#111" stroke-width="3.5"/><path d="M20 10 L12 4 L12 16Z" fill="#2a7ad0"/></svg>
<svg class="ic" style="left:1px;top:685px" viewBox="0 0 22 22"><circle cx="10" cy="10" r="5.5" fill="#b8d8f0" stroke="#2a4060" stroke-width="2"/><path d="M14 14 L19 19" stroke="#2a4060" stroke-width="3.2" stroke-linecap="round"/><path d="M1 1 L6 2 L2 6Z M21 1 L16 2 L20 6Z M1 21 L2 16 L6 20Z" fill="#5a8ac0"/></svg>
<svg class="a" style="left:0;top:0" width="1536" height="835" viewBox="0 0 1536 835">
<defs><clipPath id="vp"><rect x="52" y="149" width="1484" height="633"/></clipPath></defs>
<rect x="51" y="148" width="1485" height="634" fill="#fff"/>
<rect x="50" y="147" width="1486" height="1.6" fill="#7c7c7c"/>
<rect x="1534" y="149" width="1" height="633" fill="#dadada"/>
<g clip-path="url(#vp)">
<line x1="51" y1="222" x2="907" y2="514" stroke="#d88080" stroke-width="1" stroke-dasharray="1.5 3"/>
<line x1="907" y1="514" x2="1536" y2="725" stroke="#c83030" stroke-width="1" />
<line x1="907" y1="514" x2="1536" y2="256" stroke="#30a030" stroke-width="1" />
<line x1="907" y1="514" x2="256" y2="782" stroke="#90c890" stroke-width="1" stroke-dasharray="1.5 3"/>
<line x1="910" y1="514" x2="901" y2="782" stroke="#7070e0" stroke-width="1" stroke-dasharray="1.5 3"/>
<polygon points="271,705.5 400,656 403,662 289,705.5 332,746 321,749.5" fill="#6e3612" stroke="#2a1206" stroke-width="0.9" stroke-linejoin="round"/>
<polygon points="321,749.5 332,746 378,786 358,786" fill="#8e94ac" stroke="#2a1206" stroke-width="0.9" stroke-linejoin="round"/>
<polygon points="298.5,589.0 329.5,613.0 332.5,609.0 301.5,585.0" fill="#8e94ac" stroke="#2a1206" stroke-width="0.8" stroke-linejoin="round"/>
<line x1="300" y1="587" x2="331" y2="611" stroke="#2a1206" stroke-width="0.8" />
<polygon points="352.6,633.7 403.6,659.7 406.4,654.3 355.4,628.3" fill="#8e94ac" stroke="#2a1206" stroke-width="0.8" stroke-linejoin="round"/>
<line x1="569" y1="601" x2="617" y2="626" stroke="#1a1a1a" stroke-width="1.6" />
<polygon points="665.2,652.8 719.2,629.8 716.8,624.2 662.8,647.2" fill="#6e3612" stroke="#2a1206" stroke-width="0.8" stroke-linejoin="round"/>
<polygon points="670.7,608.7 875.7,706.7 878.3,701.3 673.3,603.3" fill="#6e3612" stroke="#2a1206" stroke-width="0.8" stroke-linejoin="round"/>
<polygon points="878.5,706.6 1250.5,498.6 1247.5,493.4 875.5,701.4" fill="#6e3612" stroke="#2a1206" stroke-width="0.8" stroke-linejoin="round"/>
<polygon points="829.8,680.3 768.8,707.3 771.2,712.7 832.2,685.7" fill="#6e3612" stroke="#2a1206" stroke-width="0.8" stroke-linejoin="round"/>
<polygon points="768.9,712.8 825.9,735.8 828.1,730.2 771.1,707.2" fill="#6e3612" stroke="#2a1206" stroke-width="0.8" stroke-linejoin="round"/>
<polygon points="825.6,730.3 722.6,783.3 725.4,788.7 828.4,735.7" fill="#6e3612" stroke="#2a1206" stroke-width="0.8" stroke-linejoin="round"/>
<polygon points="814.9,552.8 1008.9,627.8 1011.1,622.2 817.1,547.2" fill="#6e3612" stroke="#2a1206" stroke-width="0.8" stroke-linejoin="round"/>
<polygon points="902.2,516.4 1092.2,582.4 1093.8,577.6 903.8,511.6" fill="#6e3612" stroke="#2a1206" stroke-width="0.8" stroke-linejoin="round"/>
<line x1="905" y1="517" x2="1093" y2="582.5" stroke="#c83030" stroke-width="1.2" />
<line x1="669" y1="606" x2="903" y2="514" stroke="#1a1a1a" stroke-width="1.6" />
<polygon points="738.9,582.3 861.9,534.3 860.1,529.7 737.1,577.7" fill="#6e3612" stroke="#2a1206" stroke-width="0.8" stroke-linejoin="round"/>
<line x1="903" y1="514" x2="943" y2="497" stroke="#1a1a1a" stroke-width="1.6" />
<polygon points="943.8,499.1 1094.3,439.6 1092.7,435.4 942.2,494.9" fill="#6e3612" stroke="#2a1206" stroke-width="0.8" stroke-linejoin="round"/>
<line x1="1042" y1="461" x2="1102" y2="478" stroke="#2a1206" stroke-width="1.5" />
<polygon points="1066.5,451.8 1135.5,469.8 1136.5,466.2 1067.5,448.2" fill="#6e3612" stroke="#2a1206" stroke-width="0.8" stroke-linejoin="round"/>
<polygon points="1105.0,482.3 1200.0,442.3 1198.0,437.7 1103.0,477.7" fill="#6e3612" stroke="#2a1206" stroke-width="0.8" stroke-linejoin="round"/>
<polygon points="942.7,381.5 1047.7,406.0 1048.3,403.0 943.3,378.5" fill="#505060" stroke="#2a1206" stroke-width="0.9" stroke-linejoin="round"/>
<polygon points="1047.6,406.3 1133.6,425.8 1134.4,422.2 1048.4,402.7" fill="#6e3612" stroke="#2a1206" stroke-width="0.9" stroke-linejoin="round"/>
<line x1="1134" y1="424" x2="1189" y2="437.5" stroke="#2a1206" stroke-width="1.6" />
<polygon points="1186.6,440.0 1200.6,442.5 1201.4,437.5 1187.4,435.0" fill="#6e3612" stroke="#2a1206" stroke-width="0.8" stroke-linejoin="round"/>
<polygon points="1137.5,471.4 1231.5,495.9 1232.5,492.1 1138.5,467.6" fill="#6a6c7c" stroke="#2a1206" stroke-width="1.1" stroke-linejoin="round"/>
<polygon points="1229.7,496.7 1248.7,498.7 1249.3,493.3 1230.3,491.3" fill="#6e3612" stroke="#2a1206" stroke-width="0.8" stroke-linejoin="round"/>
<line x1="780" y1="519" x2="814" y2="504" stroke="#1a1a1a" stroke-width="1.5" />
<polygon points="246,371 948,246 943,379 304,572 304,585 296,588 278,575" fill="#843f12" stroke="#2a1206" stroke-width="1.15" stroke-linejoin="round"/>
<polygon points="246,371 948,246 948,248.6 246,373.6" fill="#6a3210" stroke="#2a1206" stroke-width="0.9" stroke-linejoin="round"/>
<line x1="256" y1="373" x2="287" y2="582" stroke="#2a1206" stroke-width="1" />
<line x1="262" y1="375" x2="293" y2="586" stroke="#2a1206" stroke-width="1" />
<line x1="268" y1="376" x2="299" y2="587" stroke="#2a1206" stroke-width="1" />
<polygon points="246,371 258,369 273,377 262,375" fill="#5a2a0c" stroke="#2a1206" stroke-width="0.8" stroke-linejoin="round"/>
<line x1="865" y1="261" x2="864" y2="404" stroke="#2a1206" stroke-width="1" />
<line x1="598" y1="309" x2="609" y2="481" stroke="#2a1206" stroke-width="1" />
<line x1="708" y1="288" x2="709" y2="334" stroke="#2a1206" stroke-width="1" />
<polygon points="598,309 739,342 741,540 609,481" fill="#843f12" stroke="#2a1206" stroke-width="1.15" stroke-linejoin="round"/>
<polygon points="598,309 739,342 739,344.6 598,311.6" fill="#6a3210" stroke="#2a1206" stroke-width="0.9" stroke-linejoin="round"/>
<polygon points="708,288 854,317 849,497 776,473 776,336 739,342 709,334" fill="#843f12" stroke="#2a1206" stroke-width="1.15" stroke-linejoin="round"/>
<polygon points="708,289 854,317 854,319.6 708,291.6" fill="#6a3210" stroke="#2a1206" stroke-width="0.9" stroke-linejoin="round"/>
<line x1="820.5" y1="268" x2="820.5" y2="310" stroke="#2a1206" stroke-width="1" />
<polygon points="668,356 778,335 778,522 679,557" fill="#843f12" stroke="#2a1206" stroke-width="1.15" stroke-linejoin="round"/>
<polygon points="668,356 778,335 778,338 668,359" fill="#6a3210" stroke="#2a1206" stroke-width="0.9" stroke-linejoin="round"/>
<line x1="741" y1="343" x2="741" y2="535" stroke="#2a1206" stroke-width="1" />
<line x1="747" y1="342" x2="748" y2="533" stroke="#2a1206" stroke-width="1" />
<polygon points="816,325 855,317 853.5,495 819,505.5" fill="#843f12" stroke="#2a1206" stroke-width="1.15" stroke-linejoin="round"/>
<polygon points="816,325 855,317 855,320 816,328" fill="#6a3210" stroke="#2a1206" stroke-width="0.9" stroke-linejoin="round"/>
<line x1="849" y1="318" x2="848" y2="497" stroke="#2a1206" stroke-width="1" />
<polygon points="302,396 322,405 352,630 331,614" fill="#843f12" stroke="#2a1206" stroke-width="1.15" stroke-linejoin="round"/>
<polygon points="322,405 332,402 363,626 352,630" fill="#843f12" stroke="#2a1206" stroke-width="1.15" stroke-linejoin="round"/>
<polygon points="302,396 312,393.5 332,402 322,405" fill="#5a2a0c" stroke="#2a1206" stroke-width="0.8" stroke-linejoin="round"/>
<polygon points="377,422 383,425 415,660 407,656" fill="#843f12" stroke="#2a1206" stroke-width="1.15" stroke-linejoin="round"/>
<polygon points="383,425 550,387 566,598 415,660" fill="#843f12" stroke="#2a1206" stroke-width="1.15" stroke-linejoin="round"/>
<polygon points="377,422 548,384 550,387 383,425" fill="#5a2a0c" stroke="#2a1206" stroke-width="0.8" stroke-linejoin="round"/>
<polygon points="606,404 648,418 660,650 617,626" fill="#843f12" stroke="#2a1206" stroke-width="1.15" stroke-linejoin="round"/>
<polygon points="648,418 655,416 665,646 660,650" fill="#843f12" stroke="#2a1206" stroke-width="1.15" stroke-linejoin="round"/>
<polygon points="606,404 613,402.6 655,416.5 648,418" fill="#5a2a0c" stroke="#2a1206" stroke-width="0.8" stroke-linejoin="round"/>
<line x1="923.5" y1="148" x2="910" y2="514" stroke="#3a3ad8" stroke-width="1.1" />
</g></svg>
<div class="a" style="left:1295px;top:67px;width:225px;height:362px;background:linear-gradient(90deg,#d8d8d8,#e4e4e4 30%,#c8c8c8 60%,#dcdcdc);border:1px solid #6a6a6a;box-shadow:1px 2px 3px rgba(0,0,0,.35)">
 <div class="a" style="left:6px;top:4px;font-size:12px;color:#4a4a4a">Materials</div>
 <div class="a" style="left:202px;top:4px;width:16px;height:16px;border:1px solid #9a9a9a;background:#e8e8e8"><svg class="a" style="left:3px;top:3px" width="9" height="9" viewBox="0 0 9 9"><path d="M1 1L8 8M8 1L1 8" stroke="#888" stroke-width="2.2"/><path d="M1 1L8 8M8 1L1 8" stroke="#eee" stroke-width="0.8"/></svg></div>
 <div class="a" style="left:5px;top:23px;width:213px;height:334px;background:#f0f0f0;border:1px solid #7a7a7a"></div>
</div>
<div class="a" style="left:1304px;top:93px;width:61px;height:70px;background:#fff;border:2px solid #c8c8c8;border-right-color:#b0b0b0"><svg class="a" style="left:0;top:0" width="57" height="66"><polygon points="0,0 57,66 0,66" fill="#a9b0d4"/></svg></div>
<div class="a" style="left:1367px;top:93px;width:120px;height:19px;background:#ebebeb;border-top:2px solid #9a9a9a;border-left:2px solid #9a9a9a"><span class="a" style="left:3px;top:2px;font-size:11px;color:#a0a0a0">Default</span></div>
<svg class="a" style="left:1493px;top:96px" width="14" height="16" viewBox="0 0 14 16"><rect x="2" y="1" width="10" height="14" fill="#111"/><path d="M3 3 L11 3 L7 7Z" fill="#fff"/><path d="M7 8 L7 13 M4.5 10.5 L9.5 10.5" stroke="#fff" stroke-width="2"/></svg>
<svg class="a" style="left:1492px;top:120px" width="18" height="18" viewBox="0 0 18 18"><path d="M5 5 L12 2 L16 5 L16 11 L9 14 L5 11Z" fill="#333"/><path d="M6 5 L12 3 L15 5 L9 7Z" fill="#aaa"/><circle cx="6" cy="12" r="4.5" fill="#fff" stroke="#111" stroke-width="1.3"/><path d="M6 9.5 L6 14.5 M3.5 12 L8.5 12" stroke="#111" stroke-width="1.5"/></svg>
<div class="a" style="left:1491px;top:141px;width:20px;height:21px;background:#fff;border:1px solid #b8b8b8"><svg class="a" style="left:0;top:0" width="18" height="19"><polygon points="0,0 18,19 0,19" fill="#a9b0d4"/></svg></div>
<div class="a" style="left:1301px;top:165px;width:212px;height:1px;background:#b8b8b8;border-bottom:1px solid #fff"></div>
<div class="a" style="left:1308px;top:175px;font-size:11px;color:#222">Select</div>
<div class="a" style="left:1342px;top:173px;width:1px;height:18px;background:#7a7a7a"></div>
<div class="a" style="left:1346px;top:177px;font-size:11px;color:#222">Edit</div>
<div class="a" style="left:1379px;top:175px;width:1px;height:16px;background:#7a7a7a"></div>
<svg class="a" style="left:1491px;top:170px" width="18" height="18" viewBox="0 0 18 18"><path d="M2 16 L10 8" stroke="#e09050" stroke-width="2"/><path d="M4 15 L11 7" stroke="#666" stroke-width="1.2"/><path d="M10 8 L14 2 L17 5 L11 9Z" fill="#111"/></svg>
<svg class="a" style="left:1307px;top:195px" width="16" height="16" viewBox="0 0 16 16"><path d="M2 8 L8 2 L8 5 L14 5 L14 11 L8 11 L8 14Z" fill="#fff" stroke="#888" stroke-width="1.3"/></svg>
<svg class="a" style="left:1329px;top:195px" width="16" height="16" viewBox="0 0 16 16"><path d="M14 8 L8 2 L8 5 L2 5 L2 11 L8 11 L8 14Z" fill="#fff" stroke="#888" stroke-width="1.3"/></svg>
<svg class="a" style="left:1352px;top:195px" width="16" height="16" viewBox="0 0 16 16"><path d="M1 8 L8 1.5 L15 8 L13 8 L13 14.5 L3 14.5 L3 8Z" fill="#fff" stroke="#111" stroke-width="2"/><rect x="6.5" y="9" width="3" height="5" fill="#111"/></svg>
<div class="a" style="left:1373px;top:192px;width:115px;height:21px;background:#fff;border:2px solid #8a8a8a;border-right-color:#d8d8d8;border-bottom-color:#d8d8d8"><span class="a" style="left:2px;top:2px;font-size:12px;color:#111">Stone</span><div class="a" style="left:96px;top:0;width:17px;height:17px;background:#f4f4f4;border-left:1px solid #e0e0e0;border-bottom:2px solid #888"><div class="a" style="left:4px;top:6px;width:0;height:0;border-left:5px solid transparent;border-right:5px solid transparent;border-top:6px solid #111"></div></div></div>
<svg class="a" style="left:1493px;top:195px" width="16" height="17" viewBox="0 0 16 17"><path d="M2 3 L9 3 L14 8.5 L9 14 L2 14Z" fill="#111"/><rect x="4" y="5" width="5" height="7" fill="#fff"/><path d="M5 7 L8 7 M5 9 L8 9" stroke="#3a7ad0" stroke-width="1"/></svg>
<div class="a" style="left:1301px;top:216px;width:212px;height:1px;background:#c8c8c8"></div>
<div class="a" style="left:1301px;top:217px;width:213px;height:206px;background:#fff;border-right:1px solid #bbb"></div>
<div class="a" style="left:1304px;top:221px;width:42px;height:41px;border:1px solid #d4d4d4;background:#fff"><div class="a" style="left:1px;top:1px;width:38px;height:37px;background:radial-gradient(circle at 30% 40%,rgba(255,240,190,.5) 0 6px,transparent 10px),radial-gradient(circle at 70% 75%,rgba(200,160,80,.35) 0 7px,transparent 11px),#e8c97e"></div></div>
<div class="a" style="left:1346px;top:221px;width:42px;height:41px;border:1px solid #d4d4d4;background:#fff"><div class="a" style="left:1px;top:1px;width:38px;height:37px;background:radial-gradient(rgba(230,225,180,.8) 1px,transparent 1.6px) 0 0/5px 4px,radial-gradient(rgba(90,90,60,.5) 1px,transparent 1.5px) 2px 2px/6px 5px,#aaa87c"></div></div>
<div class="a" style="left:1388px;top:221px;width:42px;height:41px;border:1px solid #d4d4d4;background:#fff"><div class="a" style="left:1px;top:1px;width:38px;height:37px;background:repeating-linear-gradient(0deg,#c07a66 0 3px,#8e4a3a 3px 4px,#c8887a 4px 6px,#a45a48 6px 8px),#b8705c"></div></div>
<div class="a" style="left:1429px;top:221px;width:42px;height:41px;border:1px solid #d4d4d4;background:#fff"><div class="a" style="left:1px;top:1px;width:38px;height:37px;background:radial-gradient(rgba(220,220,220,.7) .7px,transparent 1.2px) 0 0/5px 6px,radial-gradient(rgba(150,150,160,.6) .8px,transparent 1.3px) 2px 3px/7px 5px,#46464e"></div></div>
<div class="a" style="left:1470px;top:221px;width:42px;height:41px;border:1px solid #d4d4d4;background:#fff"><div class="a" style="left:1px;top:1px;width:38px;height:37px;background:radial-gradient(circle at 40% 30%,rgba(190,190,190,.5) 0 4px,transparent 8px),radial-gradient(circle at 70% 70%,rgba(170,170,170,.4) 0 5px,transparent 9px),radial-gradient(rgba(160,160,160,.6) 1px,transparent 2px) 0 0/6px 6px,#808082"></div></div>
<div class="a" style="left:1304px;top:262px;width:42px;height:41px;border:1px solid #d4d4d4;background:#fff"><div class="a" style="left:1px;top:1px;width:38px;height:37px;background:linear-gradient(90deg,rgba(255,255,255,.18) 50%,rgba(0,0,0,.1) 50%) 0 0/20px 20px,linear-gradient(rgba(0,0,0,.08) 50%,rgba(255,255,255,.12) 50%) 0 0/13px 13px,#b4afa8"></div></div>
<div class="a" style="left:1346px;top:262px;width:42px;height:41px;border:1px solid #d4d4d4;background:#fff"><div class="a" style="left:1px;top:1px;width:38px;height:37px;background:radial-gradient(rgba(200,200,200,.5) 1px,transparent 2px) 0 0/4px 4px,#aaacae"></div></div>
<div class="a" style="left:1388px;top:262px;width:42px;height:41px;border:1px solid #d4d4d4;background:#fff"><div class="a" style="left:1px;top:1px;width:38px;height:37px;background:radial-gradient(circle at 30% 30%,#5a6030 0 1.5px,transparent 2px),radial-gradient(circle at 70% 60%,#5a6030 0 1.5px,transparent 2px),radial-gradient(circle at 45% 80%,#5a6030 0 1.5px,transparent 2px),#a8ae7c"></div></div>
<div class="a" style="left:1429px;top:262px;width:42px;height:41px;border:1px solid #d4d4d4;background:#fff"><div class="a" style="left:1px;top:1px;width:38px;height:37px;background:repeating-linear-gradient(0deg,transparent 0 5px,rgba(160,110,50,.35) 5px 6px),repeating-linear-gradient(90deg,transparent 0 9px,rgba(160,110,50,.25) 9px 10px),#dfba76"></div></div>
<div class="a" style="left:1470px;top:262px;width:42px;height:41px;border:1px solid #d4d4d4;background:#fff"><div class="a" style="left:1px;top:1px;width:38px;height:37px;background:radial-gradient(circle at 30% 60%,rgba(210,210,210,.5) 0 4px,transparent 8px),radial-gradient(rgba(200,200,200,.5) 1px,transparent 2px) 0 0/5px 5px,#a6a6a8"></div></div>

<div class="a" style="left:0;top:782px;width:1536px;height:30px;background:#f0f0f0;border-top:1px solid #e6e6e6"></div>
<div class="a" style="left:3px;top:785px;width:1px;height:25px;background:#c8c8c8;border-right:1px solid #fff"></div>
<div class="a" style="left:233px;top:785px;width:1px;height:25px;background:#c8c8c8;border-right:1px solid #fff"></div>
<div class="a" style="left:50px;top:791px;font-size:10.5px;color:#222">Distance</div>
<div class="a" style="left:92px;top:786px;width:138px;height:21px;background:#fff;border-top:2px solid #8a8a8a;border-left:2px solid #8a8a8a"><span class="a" style="left:1px;top:3px;font-size:11px;color:#222">8'</span></div>
<div class="a" style="left:0;top:811px;width:1536px;height:2px;background:#c4c4c4;border-bottom:1px solid #fafafa"></div>
<svg class="a" style="left:0;top:815px" width="80" height="20" viewBox="0 0 80 20"><circle cx="10" cy="10.5" r="7.5" fill="#f0e0c0" stroke="#a87838" stroke-width="2"/><circle cx="32" cy="10.5" r="7.5" fill="#f0e0c0" stroke="#a87838" stroke-width="2"/><circle cx="55" cy="10.5" r="7.5" fill="#f0e0c0" stroke="#a87838" stroke-width="2"/><path d="M10 6 L10 14 M32 6 L32 15" stroke="#c8b898" stroke-width="2"/><path d="M58 7 A4 4 0 1 0 58 14" stroke="#c8b898" stroke-width="1.6" fill="none"/></svg>
<div class="a" style="left:70px;top:816px;width:1px;height:19px;background:#c0c0c0;border-right:1px solid #fff"></div>
<svg class="a" style="left:77px;top:816px" width="19" height="19" viewBox="0 0 19 19"><circle cx="9.5" cy="9.5" r="8" fill="#fff" stroke="#2a4a80" stroke-width="2"/><text x="5" y="14.5" font-size="13" font-weight="bold" fill="#111" font-family="Liberation Sans">?</text></svg>
<div class="a" style="left:99px;top:819px;font-size:10.7px;color:#222;white-space:pre">Pick face to push or pull.  Ctrl = toggle create new starting face.</div>

</body></html>
